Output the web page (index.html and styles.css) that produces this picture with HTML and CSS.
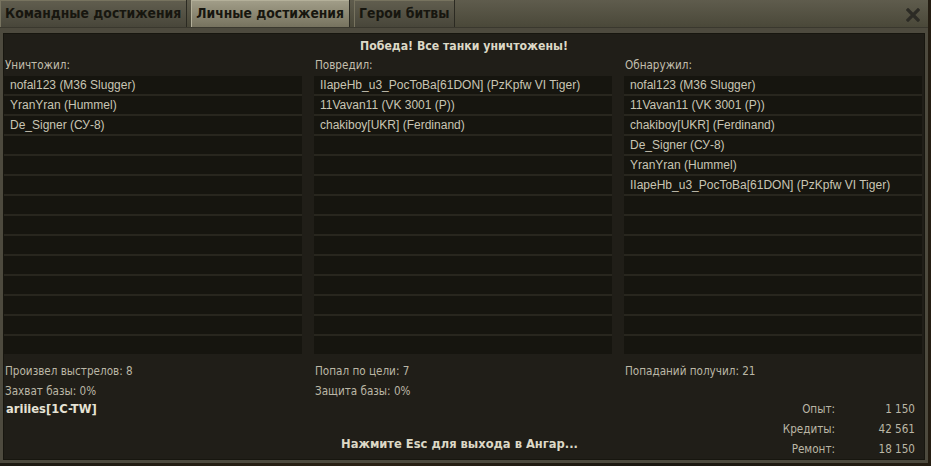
FILE: index.html
```html
<!DOCTYPE html>
<html lang="ru">
<head>
    <meta charset="UTF-8">
    <title>Личные достижения</title>
    <link rel="stylesheet" href="styles.css">
</head>
<body>
    <div class="window">
        <div class="tabs">
            <div class="tab">Командные достижения</div>
            <div class="tab active">Личные достижения</div>
            <div class="tab">Герои битвы</div>
            <div class="close">
                <svg width="14" height="14" viewBox="0 0 14 14"><path d="M2 2 L12 12 M12 2 L2 12" stroke="#2c2b25" stroke-width="3.2" stroke-linecap="square"/></svg>
            </div>
        </div>
        <div class="frame">
            <div class="panel">
                <div class="result">Победа! Все танки уничтожены!</div>

                <div class="columns">
                    <div class="column">
                        <div class="label">Уничтожил:</div>
                        <div class="list">
                            <div class="row">nofal123 (M36 Slugger)</div>
                            <div class="row">YranYran (Hummel)</div>
                            <div class="row">De_Signer (СУ-8)</div>
                            <div class="row"></div><div class="row"></div><div class="row"></div><div class="row"></div>
                            <div class="row"></div><div class="row"></div><div class="row"></div><div class="row"></div>
                            <div class="row"></div><div class="row"></div><div class="row"></div>
                        </div>
                    </div>
                    <div class="column">
                        <div class="label">Повредил:</div>
                        <div class="list">
                            <div class="row">IIapeHb_u3_PocToBa[61DON] (PzKpfw VI Tiger)</div>
                            <div class="row">11Vavan11 (VK 3001 (P))</div>
                            <div class="row">chakiboy[UKR] (Ferdinand)</div>
                            <div class="row"></div><div class="row"></div><div class="row"></div><div class="row"></div>
                            <div class="row"></div><div class="row"></div><div class="row"></div><div class="row"></div>
                            <div class="row"></div><div class="row"></div><div class="row"></div>
                        </div>
                    </div>
                    <div class="column">
                        <div class="label">Обнаружил:</div>
                        <div class="list">
                            <div class="row">nofal123 (M36 Slugger)</div>
                            <div class="row">11Vavan11 (VK 3001 (P))</div>
                            <div class="row">chakiboy[UKR] (Ferdinand)</div>
                            <div class="row">De_Signer (СУ-8)</div>
                            <div class="row">YranYran (Hummel)</div>
                            <div class="row">IIapeHb_u3_PocToBa[61DON] (PzKpfw VI Tiger)</div>
                            <div class="row"></div><div class="row"></div><div class="row"></div><div class="row"></div>
                            <div class="row"></div><div class="row"></div><div class="row"></div><div class="row"></div>
                        </div>
                    </div>
                </div>

                <div class="stats">
                    <div class="stat">Произвел выстрелов: 8</div>
                    <div class="stat">Попал по цели: 7</div>
                    <div class="stat">Попаданий получил: 21</div>
                    <div class="stat">Захват базы: 0%</div>
                    <div class="stat">Защита базы: 0%</div>
                    <div class="stat"></div>
                </div>

                <div class="footer">
                    <div class="player">ariiies[1C-TW]</div>
                    <div class="hint">Нажмите Esc для выхода в Ангар...</div>
                    <div class="rewards">
                        <div class="reward-name">Опыт:</div><div class="reward-value">1 150</div>
                        <div class="reward-name">Кредиты:</div><div class="reward-value">42 561</div>
                        <div class="reward-name">Ремонт:</div><div class="reward-value">18 150</div>
                    </div>
                </div>
            </div>
        </div>
    </div>
</body>
</html>
```

FILE: styles.css
```css
body {
    margin: 0;
    width: 931px;
    height: 466px;
    overflow: hidden;
    background: linear-gradient(90deg, #1d1a12, #2a2114 40%, #1a1710 70%, #241d12);
    font-family: "DejaVu Sans Condensed", "Liberation Sans", sans-serif;
}
.window {
    width: 928px;
    height: 462px;
    display: flex;
    flex-direction: column;
}
.tabs {
    height: 27px;
    display: flex;
    background: linear-gradient(#5f5c4d, #4a4839);
    border-bottom: 1px solid #3a382e;
}
.tab {
    padding: 0 5px;
    margin-right: 4px;
    font-weight: bold;
    font-size: 13.8px;
    line-height: 27px;
    color: #17160f;
    background: linear-gradient(#615e4f, #48463a);
    border-right: 1px solid #2b2a22;
    box-shadow: inset 1px 1px 0 #77735f;
}
.tab.active {
    background: linear-gradient(#a29e89, #77735f);
    box-shadow: inset 1px 1px 0 #b4b09a;
}
.close {
    margin-left: auto;
    padding: 7px 8px 0 0;
}
.frame {
    flex: 1;
    display: flex;
    background: #4d4a3e;
    padding: 5px 3px 3px 3px;
}
.panel {
    flex: 1;
    display: flex;
    flex-direction: column;
    background: #201e18;
    border: 1px solid #17160f;
}
.result {
    text-align: center;
    font-weight: bold;
    font-size: 12.2px;
    line-height: 18px;
    padding-top: 3px;
    color: #dcd8c6;
}
.columns {
    display: grid;
    grid-template-columns: 298px 298px 298px;
    column-gap: 12px;
}
.label {
    font-size: 11.6px;
    line-height: 20px;
    padding-left: 1px;
    color: #c3bfae;
}
.list {
    margin-top: 1px;
    background: #28261e;
}
.row {
    height: 18px;
    margin-bottom: 2px;
    padding-left: 6px;
    background: #16150f;
    font-family: "Liberation Sans", Arial, sans-serif;
    font-size: 12px;
    line-height: 19px;
    color: #c9c5b4;
    white-space: nowrap;
}
.row:last-child {
    margin-bottom: 0;
}
.stats {
    display: grid;
    grid-template-columns: 298px 298px 298px;
    column-gap: 12px;
    margin-top: 7px;
}
.stat {
    font-size: 11.6px;
    line-height: 20px;
    padding-left: 1px;
    color: #bbb7a6;
}
.footer {
    flex: 1;
    display: grid;
    grid-template-columns: 1fr auto 1fr;
    padding-right: 9px;
}
.player {
    font-weight: bold;
    font-size: 12.8px;
    line-height: 16px;
    padding-left: 2px;
    color: #e6e3d5;
}
.hint {
    align-self: end;
    margin-bottom: 6px;
    font-weight: bold;
    font-size: 12.8px;
    line-height: 18px;
    color: #dcd8c6;
}
.rewards {
    justify-self: end;
    display: grid;
    grid-template-columns: auto 80px;
    align-content: start;
    margin-top: -2px;
}
.reward-name,
.reward-value {
    text-align: right;
    font-size: 11.6px;
    line-height: 20px;
    color: #bbb7a6;
}
```
